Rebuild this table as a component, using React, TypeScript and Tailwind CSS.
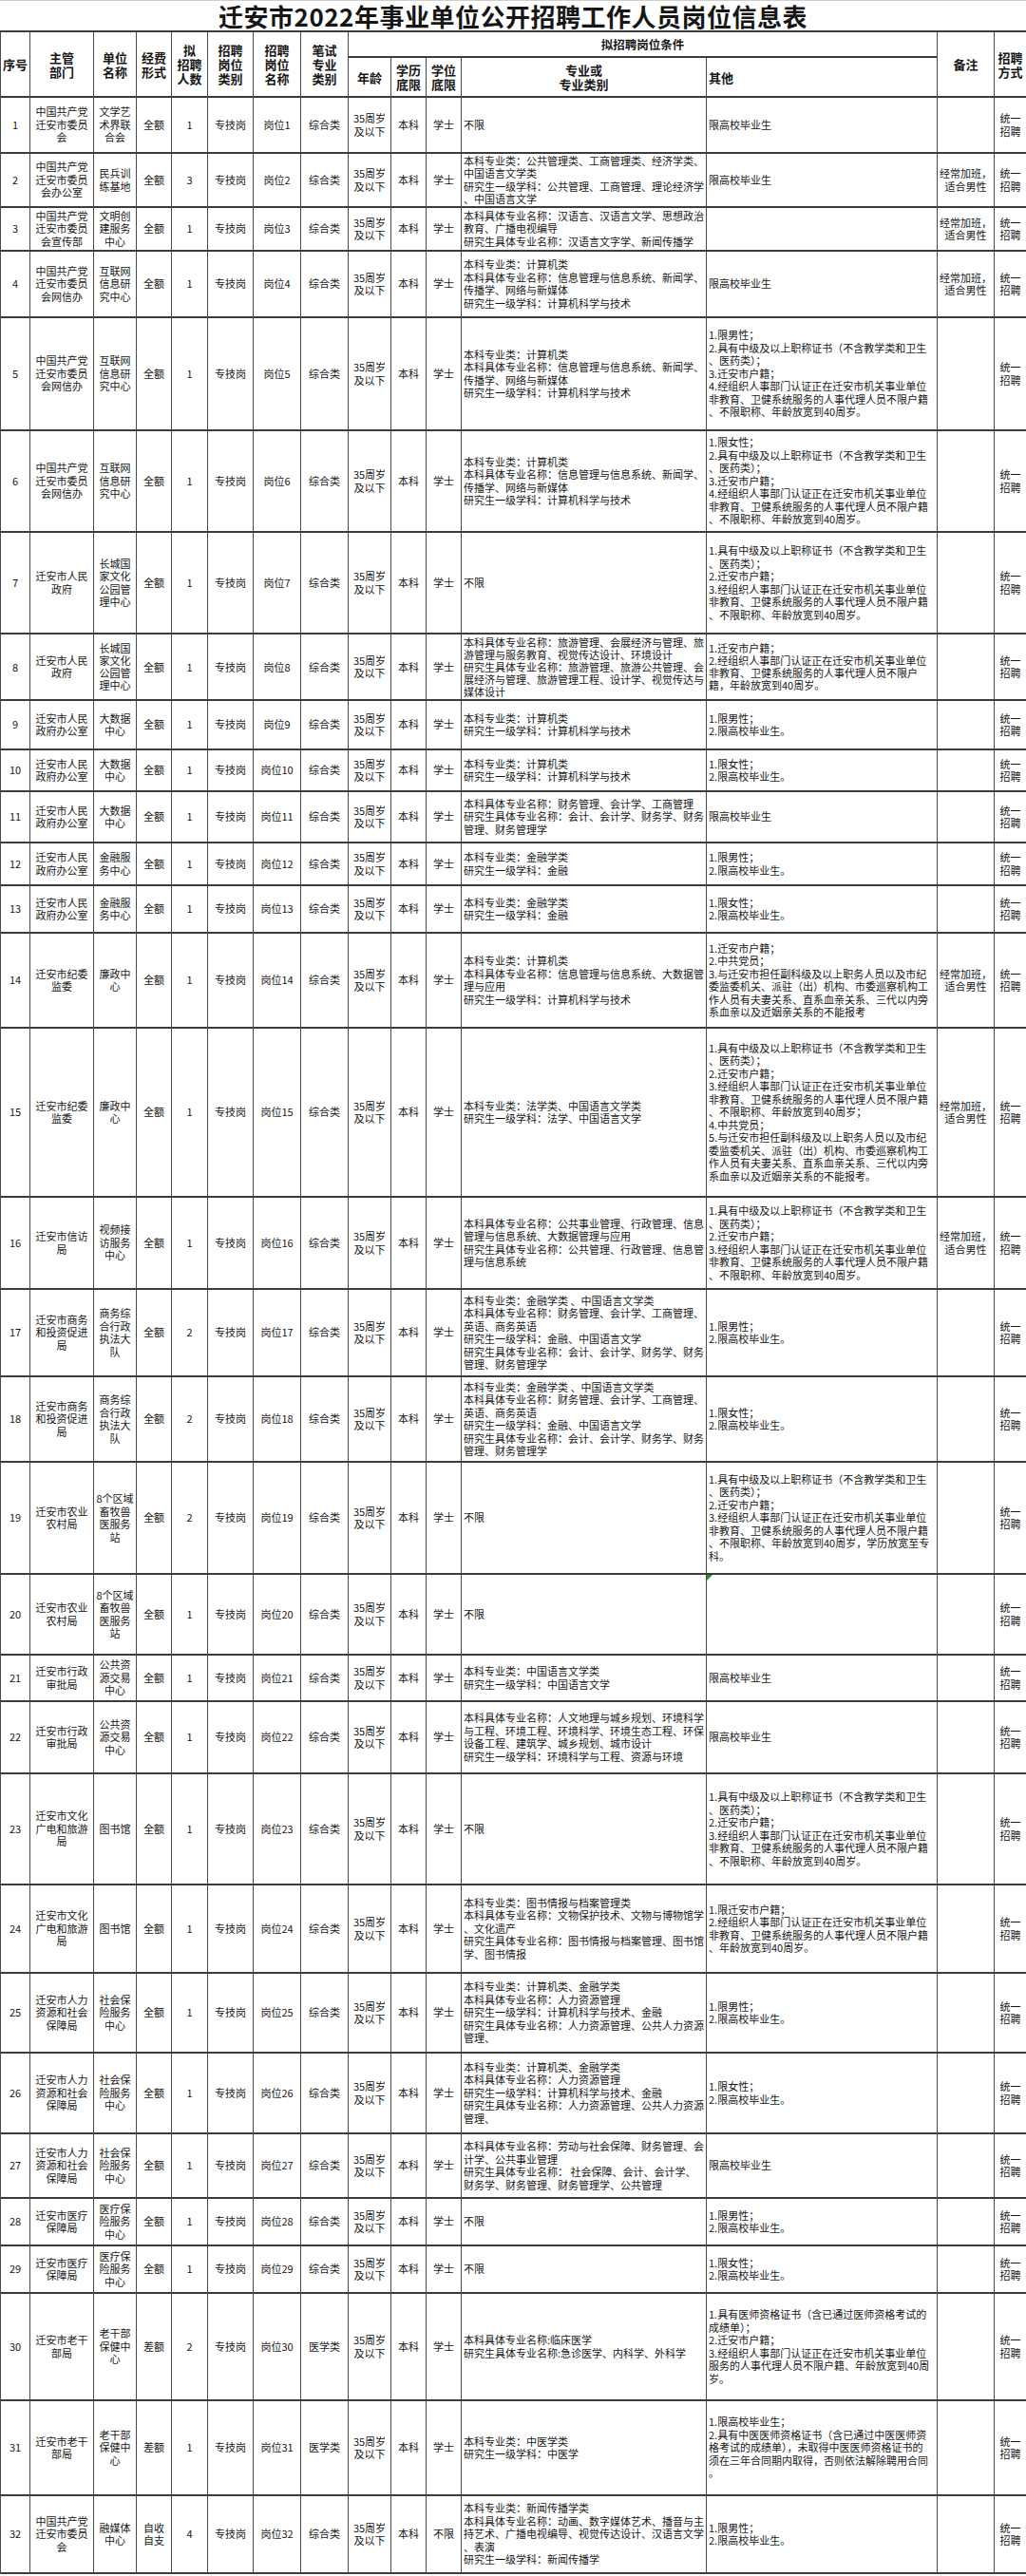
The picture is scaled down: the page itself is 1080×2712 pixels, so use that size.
import React from "react"

const COLS =
  "grid grid-cols-[31px_67px_45px_37px_38px_48px_50px_50px_45px_37px_37px_258px_243px_60px_34px]"

type Row = {
  no: number
  h: string
  lh?: string
  dept: string[]
  unit: string[]
  fund?: string[]
  n: number
  exam?: string
  deg?: string
  major: string[]
  other: string[]
  note?: boolean
  flag?: boolean
}

const CCP = ["中国共产党", "迁安市委员", "会"]
const WXB = ["中国共产党", "迁安市委员", "会网信办"]
const HLW = ["互联网", "信息研", "究中心"]
const ZF = ["迁安市人民", "政府"]
const ZFB = ["迁安市人民", "政府办公室"]
const CCGY = ["长城国", "家文化", "公园管", "理中心"]
const JW = ["迁安市纪委", "监委"]
const LZ = ["廉政中", "心"]
const SW = ["迁安市商务", "和投资促进", "局"]
const SWZ = ["商务综", "合行政", "执法大", "队"]
const NY = ["迁安市农业", "农村局"]
const XMS = ["8个区域", "畜牧兽", "医服务", "站"]
const SP = ["迁安市行政", "审批局"]
const GGZY = ["公共资", "源交易", "中心"]
const WH = ["迁安市文化", "广电和旅游", "局"]
const RS = ["迁安市人力", "资源和社会", "保障局"]
const SB = ["社会保", "险服务", "中心"]
const YB = ["迁安市医疗", "保障局"]
const YBZ = ["医疗保", "险服务", "中心"]
const LG = ["迁安市老干", "部局"]
const LGZ = ["老干部", "保健中", "心"]

const JSJ = ["本科专业类：计算机类", "研究生一级学科：计算机科学与技术"]
const JSJ4 = [
  "本科专业类：计算机类",
  "本科具体专业名称：信息管理与信息系统、新闻学、",
  "传播学、网络与新媒体",
  "研究生一级学科：计算机科学与技术",
]
const JR = ["本科专业类：金融学类", "研究生一级学科：金融"]
const SWM = [
  "本科专业类：金融学类 、中国语言文学类",
  "本科具体专业名称：财务管理、会计学、工商管理、",
  "英语、商务英语",
  "研究生一级学科：金融、中国语言文学",
  "研究生具体专业名称：会计、会计学、财务学、财务",
  "管理、财务管理学",
]
const RSM = [
  "本科专业类：计算机类、金融学类",
  "本科具体专业名称：人力资源管理",
  "研究生一级学科：计算机科学与技术、金融",
  "研究生具体专业名称：人力资源管理、公共人力资源",
  "管理、",
]

const M = ["1.限男性；", "2.限高校毕业生。"]
const F = ["1.限女性；", "2.限高校毕业生。"]
const GX = ["限高校毕业生"]
const ZC = [
  "1.具有中级及以上职称证书（不含教学类和卫生",
  "、医药类）；",
  "2.迁安市户籍；",
  "3.经组织人事部门认证正在迁安市机关事业单位",
  "非教育、卫健系统服务的人事代理人员不限户籍",
  "、不限职称、年龄放宽到40周岁。",
]
const ZC4 = (first: string) => [
  first,
  "2.具有中级及以上职称证书（不含教学类和卫生",
  "、医药类）；",
  "3.迁安市户籍；",
  "4.经组织人事部门认证正在迁安市机关事业单位",
  "非教育、卫健系统服务的人事代理人员不限户籍",
  "、不限职称、年龄放宽到40周岁。",
]

const ROWS: Row[] = [
  { no: 1, h: "h-[59px]", dept: CCP, unit: ["文学艺", "术界联", "合会"], n: 1, major: ["不限"], other: GX },
  {
    no: 2, h: "h-[57px]", dept: ["中国共产党", "迁安市委员", "会办公室"], unit: ["民兵训", "练基地"], n: 3,
    major: ["本科专业类：公共管理类、工商管理类、经济学类、", "中国语言文学类", "研究生一级学科：公共管理、工商管理、理论经济学", "、中国语言文学"],
    other: GX, note: true,
  },
  {
    no: 3, h: "h-[46px]", dept: ["中国共产党", "迁安市委员", "会宣传部"], unit: ["文明创", "建服务", "中心"], n: 1,
    major: ["本科具体专业名称：汉语言、汉语言文学、思想政治", "教育、广播电视编导", "研究生具体专业名称：汉语言文字学、新闻传播学"],
    other: [], note: true,
  },
  { no: 4, h: "h-[70px]", dept: WXB, unit: HLW, n: 1, major: JSJ4, other: GX, note: true },
  { no: 5, h: "h-[119px]", dept: WXB, unit: HLW, n: 1, major: JSJ4, other: ZC4("1.限男性；") },
  { no: 6, h: "h-[107px]", dept: WXB, unit: HLW, n: 1, major: JSJ4, other: ZC4("1.限女性；") },
  { no: 7, h: "h-[107px]", dept: ZF, unit: CCGY, n: 1, major: ["不限"], other: ZC },
  {
    no: 8, h: "h-[70px]", lh: "leading-[13px]", dept: ZF, unit: CCGY, n: 1,
    major: [
      "本科具体专业名称：旅游管理、会展经济与管理、旅",
      "游管理与服务教育、视觉传达设计、环境设计",
      "研究生具体专业名称：旅游管理、旅游公共管理、会",
      "展经济与管理、旅游管理工程、设计学、视觉传达与",
      "媒体设计",
    ],
    other: ["1.迁安市户籍；", "2.经组织人事部门认证正在迁安市机关事业单位", "非教育、卫健系统服务的人事代理人员不限户", "籍，年龄放宽到40周岁。"],
  },
  { no: 9, h: "h-[52px]", dept: ZFB, unit: ["大数据", "中心"], n: 1, major: JSJ, other: M },
  { no: 10, h: "h-[44px]", dept: ZFB, unit: ["大数据", "中心"], n: 1, major: JSJ, other: F },
  {
    no: 11, h: "h-[54px]", dept: ZFB, unit: ["大数据", "中心"], n: 1,
    major: ["本科具体专业名称：财务管理、会计学、工商管理", "研究生具体专业名称：会计、会计学、财务学、财务", "管理、财务管理学"],
    other: GX,
  },
  { no: 12, h: "h-[45px]", dept: ZFB, unit: ["金融服", "务中心"], n: 1, major: JR, other: M },
  { no: 13, h: "h-[50px]", dept: ZFB, unit: ["金融服", "务中心"], n: 1, major: JR, other: F },
  {
    no: 14, h: "h-[100px]", dept: JW, unit: LZ, n: 1,
    major: ["本科专业类：计算机类", "本科具体专业名称：信息管理与信息系统、大数据管", "理与应用", "研究生一级学科：计算机科学与技术"],
    other: [
      "1.迁安市户籍；",
      "2.中共党员；",
      "3.与迁安市担任副科级及以上职务人员以及市纪",
      "委监委机关、派驻（出）机构、市委巡察机构工",
      "作人员有夫妻关系、直系血亲关系、三代以内旁",
      "系血亲以及近姻亲关系的不能报考",
    ],
    note: true,
  },
  {
    no: 15, h: "h-[178px]", dept: JW, unit: LZ, n: 1,
    major: ["本科专业类：法学类、中国语言文学类", "研究生一级学科：法学、中国语言文学"],
    other: [
      "1.具有中级及以上职称证书（不含教学类和卫生",
      "、医药类）；",
      "2.迁安市户籍；",
      "3.经组织人事部门认证正在迁安市机关事业单位",
      "非教育、卫健系统服务的人事代理人员不限户籍",
      "、不限职称、年龄放宽到40周岁；",
      "4.中共党员；",
      "5.与迁安市担任副科级及以上职务人员以及市纪",
      "委监委机关、派驻（出）机构、市委巡察机构工",
      "作人员有夫妻关系、直系血亲关系、三代以内旁",
      "系血亲以及近姻亲关系的不能报考。",
    ],
    note: true,
  },
  {
    no: 16, h: "h-[97px]", dept: ["迁安市信访", "局"], unit: ["视频接", "访服务", "中心"], n: 1,
    major: ["本科具体专业名称：公共事业管理、行政管理、信息", "管理与信息系统、大数据管理与应用", "研究生具体专业名称：公共管理、行政管理、信息管", "理与信息系统"],
    other: ZC, note: true,
  },
  { no: 17, h: "h-[92px]", dept: SW, unit: SWZ, n: 2, major: SWM, other: M },
  { no: 18, h: "h-[90px]", dept: SW, unit: SWZ, n: 2, major: SWM, other: F },
  {
    no: 19, h: "h-[118px]", dept: NY, unit: XMS, n: 2, major: ["不限"],
    other: [
      "1.具有中级及以上职称证书（不含教学类和卫生",
      "、医药类）；",
      "2.迁安市户籍；",
      "3.经组织人事部门认证正在迁安市机关事业单位",
      "非教育、卫健系统服务的人事代理人员不限户籍",
      "、不限职称、年龄放宽到40周岁，学历放宽至专",
      "科。",
    ],
  },
  { no: 20, h: "h-[85px]", dept: NY, unit: XMS, n: 1, major: ["不限"], other: [], flag: true },
  {
    no: 21, h: "h-[49px]", dept: SP, unit: GGZY, n: 1,
    major: ["本科专业类：中国语言文学类", "研究生一级学科：中国语言文学"], other: GX,
  },
  {
    no: 22, h: "h-[76px]", dept: SP, unit: GGZY, n: 1,
    major: [
      "本科具体专业名称：人文地理与城乡规划、环境科学",
      "与工程、环境工程、环境科学、环境生态工程、环保",
      "设备工程、建筑学、城乡规划、城市设计",
      "研究生一级学科：环境科学与工程、资源与环境",
    ],
    other: GX,
  },
  { no: 23, h: "h-[117px]", dept: WH, unit: ["图书馆"], n: 1, major: ["不限"], other: ZC },
  {
    no: 24, h: "h-[93px]", dept: WH, unit: ["图书馆"], n: 1,
    major: [
      "本科专业类：图书情报与档案管理类",
      "本科具体专业名称：文物保护技术、文物与博物馆学",
      "、文化遗产",
      "研究生具体专业名称：图书情报与档案管理、图书馆",
      "学、图书情报",
    ],
    other: ["1.限迁安市户籍；", "2.经组织人事部门认证正在迁安市机关事业单位", "非教育、卫健系统服务的人事代理人员不限户籍", "、年龄放宽到40周岁。"],
  },
  { no: 25, h: "h-[84px]", dept: RS, unit: SB, n: 1, major: RSM, other: M },
  { no: 26, h: "h-[85px]", dept: RS, unit: SB, n: 1, major: RSM, other: F },
  {
    no: 27, h: "h-[68px]", dept: RS, unit: SB, n: 1,
    major: [
      "本科具体专业名称：劳动与社会保障、财务管理、会",
      "计学、公共事业管理",
      "研究生具体专业名称： 社会保障、会计、会计学、",
      "财务学、财务管理、财务管理学、公共管理",
    ],
    other: GX,
  },
  { no: 28, h: "h-[50px]", dept: YB, unit: YBZ, n: 1, major: ["不限"], other: M },
  { no: 29, h: "h-[50px]", dept: YB, unit: YBZ, n: 1, major: ["不限"], other: F },
  {
    no: 30, h: "h-[113px]", dept: LG, unit: LGZ, fund: ["差额"], n: 2, exam: "医学类",
    major: ["本科具体专业名称:临床医学", "研究生具体专业名称:急诊医学、内科学、外科学"],
    other: [
      "1.具有医师资格证书（含已通过医师资格考试的",
      "成绩单）；",
      "2.迁安市户籍；",
      "3.经组织人事部门认证正在迁安市机关事业单位",
      "服务的人事代理人员不限户籍、年龄放宽到40周",
      "岁。",
    ],
  },
  {
    no: 31, h: "h-[100px]", dept: LG, unit: LGZ, fund: ["差额"], n: 1, exam: "医学类",
    major: ["本科专业类：中医学类", "研究生一级学科：中医学"],
    other: [
      "1.限高校毕业生；",
      "2.具有中医医师资格证书（含已通过中医医师资",
      "格考试的成绩单），未取得中医医师资格证书的",
      "须在三年合同期内取得，否则依法解除聘用合同",
      "。",
    ],
  },
  {
    no: 32, h: "h-[82px]", dept: CCP, unit: ["融媒体", "中心"], fund: ["自收", "自支"], n: 4, deg: "不限",
    major: [
      "本科专业类：新闻传播学类",
      "本科具体专业名称：动画、数字媒体艺术、播音与主",
      "持艺术、广播电视编导、视觉传达设计、汉语言文学",
      "、表演",
      "研究生一级学科：新闻传播学",
    ],
    other: M,
  },
]

function Cell({ lines, left, extra }: { lines: string[]; left?: boolean; extra?: React.ReactNode }) {
  return (
    <div
      className={`relative flex items-center overflow-hidden border-r border-[#4a4a4a] ${
        left ? "justify-start pl-[2px] text-left" : "justify-center text-center"
      }`}
    >
      {extra}
      <div className="whitespace-nowrap">
        {lines.map((l, i) => (
          <div key={i}>{l}</div>
        ))}
      </div>
    </div>
  )
}

function Head({ lines, className }: { lines: string[]; className?: string }) {
  return (
    <div className={`flex items-center justify-center text-center border-r border-[#4a4a4a] ${className ?? ""}`}>
      <div className="whitespace-nowrap">
        {lines.map((l, i) => (
          <div key={i}>{l}</div>
        ))}
      </div>
    </div>
  )
}

export default function App() {
  return (
    <div className="w-[1080px] bg-white text-[#161616] font-['Noto_Sans_CJK_SC','Liberation_Sans',sans-serif]">
      {/* Title */}
      <div className="h-[34px] border-t border-[#cfcfcf] border-b-2 border-b-[#3c3c3c] flex items-center justify-center">
        <h1 className="text-[26px] leading-[32px] font-bold tracking-[0.5px]">迁安市2022年事业单位公开招聘工作人员岗位信息表</h1>
      </div>

      <div className="border-l border-[#4a4a4a]">
        {/* Header */}
        <div className={`${COLS} grid-rows-[27px_40px] h-[69px] border-b-2 border-[#3c3c3c] text-[13px] leading-[15px] font-bold`}>
          <Head className="row-span-2" lines={["序号"]} />
          <Head className="row-span-2" lines={["主管", "部门"]} />
          <Head className="row-span-2" lines={["单位", "名称"]} />
          <Head className="row-span-2" lines={["经费", "形式"]} />
          <Head className="row-span-2" lines={["拟", "招聘", "人数"]} />
          <Head className="row-span-2" lines={["招聘", "岗位", "类别"]} />
          <Head className="row-span-2" lines={["招聘", "岗位", "名称"]} />
          <Head className="row-span-2" lines={["笔试", "专业", "类别"]} />
          <Head className="col-span-5 border-b-2 border-b-[#3c3c3c] text-[12.5px]" lines={["拟招聘岗位条件"]} />
          <Head className="row-span-2 col-start-14 row-start-1" lines={["备注"]} />
          <Head className="row-span-2 col-start-15 row-start-1" lines={["招聘", "方式"]} />
          <Head className="col-start-9 row-start-2" lines={["年龄"]} />
          <Head className="col-start-10 row-start-2" lines={["学历", "底限"]} />
          <Head className="col-start-11 row-start-2" lines={["学位", "底限"]} />
          <Head className="col-start-12 row-start-2" lines={["专业或", "专业类别"]} />
          <div className="col-start-13 row-start-2 flex items-center pl-[2px] border-r border-[#4a4a4a]">其他</div>
        </div>

        {/* Body */}
        {ROWS.map((r) => (
          <div
            key={r.no}
            className={`${COLS} ${r.h} border-b-2 border-[#3c3c3c] text-[11px] ${r.lh ?? "leading-[13.5px]"}`}
          >
            <Cell lines={[String(r.no)]} />
            <Cell lines={r.dept} />
            <Cell lines={r.unit} />
            <Cell lines={r.fund ?? ["全额"]} />
            <Cell lines={[String(r.n)]} />
            <Cell lines={["专技岗"]} />
            <Cell lines={[`岗位${r.no}`]} />
            <Cell lines={[r.exam ?? "综合类"]} />
            <Cell lines={["35周岁", "及以下"]} />
            <Cell lines={["本科"]} />
            <Cell lines={[r.deg ?? "学士"]} />
            <Cell lines={r.major} left />
            <Cell
              lines={r.other}
              left
              extra={
                r.flag ? (
                  <span className="absolute left-0 top-0 w-0 h-0 border-t-[6px] border-t-[#2e8b2e] border-r-[6px] border-r-transparent" />
                ) : null
              }
            />
            <Cell lines={r.note ? ["经常加班，", "适合男性"] : []} />
            <Cell lines={["统一", "招聘"]} />
          </div>
        ))}
      </div>
    </div>
  )
}
